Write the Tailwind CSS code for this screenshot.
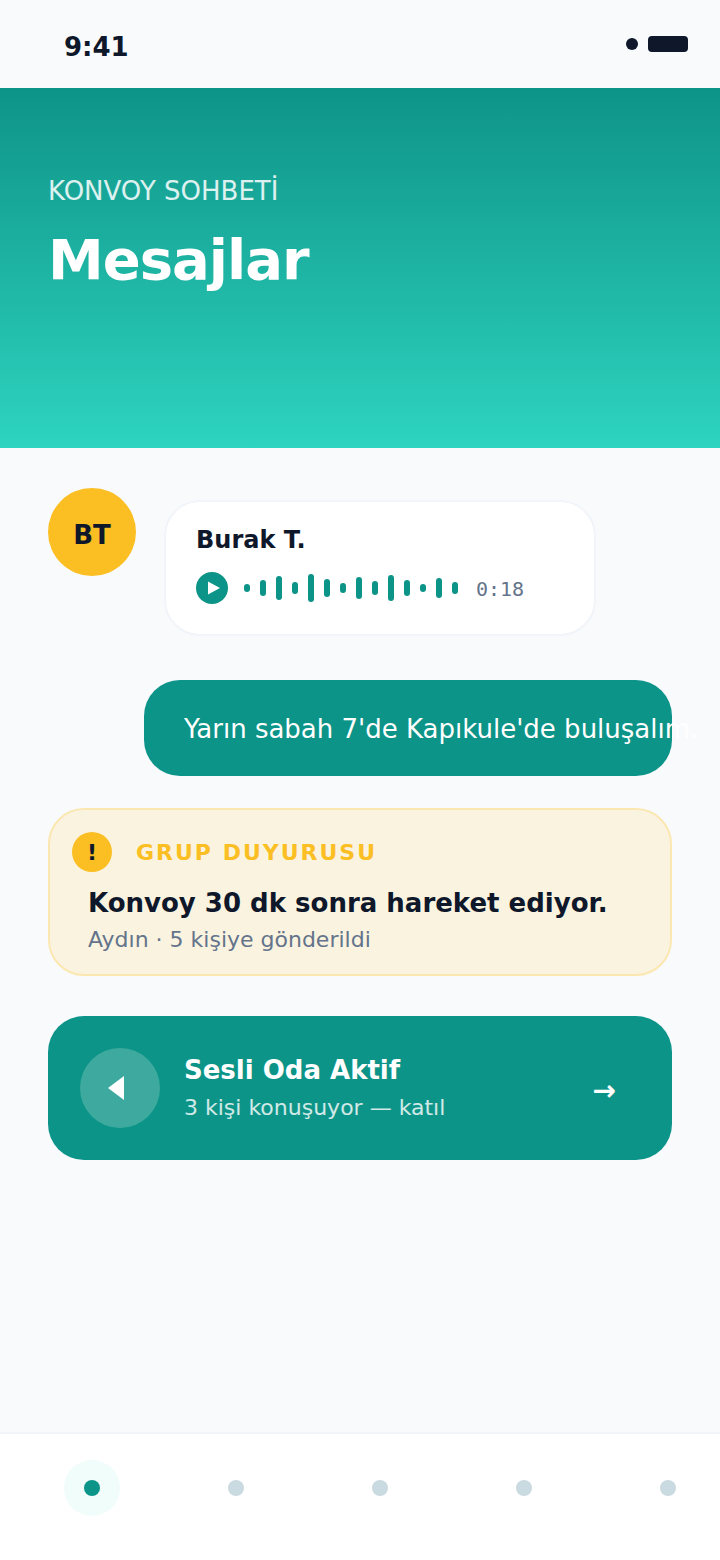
<!DOCTYPE html>
<html lang="tr">
<head>
    <meta charset="UTF-8">
    <meta name="viewport" content="width=device-width, initial-scale=1.0">
    <title>Mesajlar</title>
    <script src="https://cdn.jsdelivr.net/npm/@tailwindcss/browser@4"></script>
</head>
<body class="bg-[#f8fafc] font-['DejaVu_Sans',sans-serif] text-[#0f172a] w-[720px] h-[1560px] overflow-hidden flex flex-col">
    <!-- status bar -->
    <div class="h-[88px] flex justify-between pl-16 pr-8 shrink-0">
        <span class="text-[26px] leading-[32px] font-bold mt-[31px]">9:41</span>
        <div class="flex items-center gap-[10px] mt-9 h-4">
            <div class="w-3 h-3 rounded-full bg-[#0f172a]"></div>
            <div class="w-10 h-4 rounded bg-[#0f172a]"></div>
        </div>
    </div>

    <!-- header -->
    <header class="h-[360px] shrink-0 bg-gradient-to-b from-[#0d9488] to-[#2dd4bf] px-12 pt-[87px]">
        <p class="text-[26px] leading-[32px] text-white/85">KONVOY SOHBETİ</p>
        <h1 class="text-[56px] leading-[72px] tracking-[-1px] font-bold text-white mt-[17px]">Mesajlar</h1>
    </header>

    <main class="flex-1 px-12 pt-10">
        <!-- voice message -->
        <div class="flex items-start gap-7">
            <div class="w-[88px] h-[88px] rounded-full bg-[#fbbf24] flex items-center justify-center text-[26px] font-bold shrink-0 pt-[6px]">BT</div>
            <div class="mt-3 w-[432px] h-[136px] bg-white border-2 border-[#f1f5f9] rounded-[36px] pl-[30px] pt-[22px]">
                <p class="text-[24px] leading-[32px] font-bold">Burak T.</p>
                <div class="flex items-center mt-[16px] h-8">
                    <div class="w-8 h-8 rounded-full bg-[#0d9488] flex items-center justify-center shrink-0">
                        <svg width="32" height="32" viewBox="0 0 32 32"><polygon points="12,9.5 24,16 12,22.5" fill="#fff"/></svg>
                    </div>
                    <div class="flex items-center gap-[10px] ml-4">
                        <span class="w-[6px] h-2 rounded-full bg-[#0d9488]"></span>
                        <span class="w-[6px] h-4 rounded-full bg-[#0d9488]"></span>
                        <span class="w-[6px] h-6 rounded-full bg-[#0d9488]"></span>
                        <span class="w-[6px] h-3 rounded-full bg-[#0d9488]"></span>
                        <span class="w-[6px] h-7 rounded-full bg-[#0d9488]"></span>
                        <span class="w-[6px] h-[18px] rounded-full bg-[#0d9488]"></span>
                        <span class="w-[6px] h-[10px] rounded-full bg-[#0d9488]"></span>
                        <span class="w-[6px] h-[22px] rounded-full bg-[#0d9488]"></span>
                        <span class="w-[6px] h-[14px] rounded-full bg-[#0d9488]"></span>
                        <span class="w-[6px] h-[26px] rounded-full bg-[#0d9488]"></span>
                        <span class="w-[6px] h-4 rounded-full bg-[#0d9488]"></span>
                        <span class="w-[6px] h-2 rounded-full bg-[#0d9488]"></span>
                        <span class="w-[6px] h-5 rounded-full bg-[#0d9488]"></span>
                        <span class="w-[6px] h-3 rounded-full bg-[#0d9488]"></span>
                    </div>
                    <span class="ml-[18px] font-['DejaVu_Sans_Mono',monospace] text-[20px] leading-6 text-[#64748b] mt-[2px]">0:18</span>
                </div>
            </div>
        </div>

        <!-- sent bubble -->
        <div class="mt-[44px] ml-24 h-24 bg-[#0d9488] rounded-[36px] pl-10 flex items-center">
            <p class="text-[26px] leading-9 text-white whitespace-nowrap mt-[2px]">Yarın sabah 7'de Kapıkule'de buluşalım.</p>
        </div>

        <!-- announcement -->
        <div class="mt-8 h-[168px] bg-[#faf3e0] border-2 border-[#fbe7b0] rounded-[36px] pl-[22px] pt-[22px]">
            <div class="flex items-center gap-6">
                <div class="w-10 h-10 rounded-full bg-[#fbbf24] flex items-center justify-center text-[22px] font-bold">!</div>
                <span class="text-[22px] leading-8 font-bold tracking-[2px] text-[#fbbf24] mt-[1px]">GRUP DUYURUSU</span>
            </div>
            <p class="ml-4 mt-[13px] text-[26px] leading-9 font-bold whitespace-nowrap">Konvoy 30 dk sonra hareket ediyor.</p>
            <p class="ml-4 mt-[3px] text-[22px] leading-8 text-[#64748b]">Aydın · 5 kişiye gönderildi</p>
        </div>

        <!-- voice room -->
        <div class="mt-10 h-[144px] bg-[#0d9488] rounded-[36px] pl-8 pr-14 flex items-center">
            <div class="w-20 h-20 rounded-full bg-white/20 flex items-center justify-center shrink-0">
                <svg width="80" height="80" viewBox="0 0 80 80"><polygon points="44,28 44,52 28,40" fill="#fff"/></svg>
            </div>
            <div class="ml-6 flex-1">
                <p class="text-[26px] leading-9 font-bold text-white">Sesli Oda Aktif</p>
                <p class="text-[22px] leading-8 text-white/80 mt-[4px]">3 kişi konuşuyor — katıl</p>
            </div>
            <span class="text-[28px] leading-9 font-bold text-white mt-[6px]">→</span>
        </div>
    </main>

    <!-- bottom nav -->
    <nav class="h-[128px] shrink-0 bg-white border-t-2 border-[#f1f5f9] pl-16 pt-[26px] flex gap-[88px]">
        <div class="w-14 h-14 rounded-full bg-[#f0fdfa] flex items-center justify-center shrink-0"><div class="w-4 h-4 rounded-full bg-[#0d9488]"></div></div>
        <div class="w-14 h-14 flex items-center justify-center shrink-0"><div class="w-4 h-4 rounded-full bg-[#c9dae0]"></div></div>
        <div class="w-14 h-14 flex items-center justify-center shrink-0"><div class="w-4 h-4 rounded-full bg-[#c9dae0]"></div></div>
        <div class="w-14 h-14 flex items-center justify-center shrink-0"><div class="w-4 h-4 rounded-full bg-[#c9dae0]"></div></div>
        <div class="w-14 h-14 flex items-center justify-center shrink-0"><div class="w-4 h-4 rounded-full bg-[#c9dae0]"></div></div>
    </nav>
</body>
</html>
